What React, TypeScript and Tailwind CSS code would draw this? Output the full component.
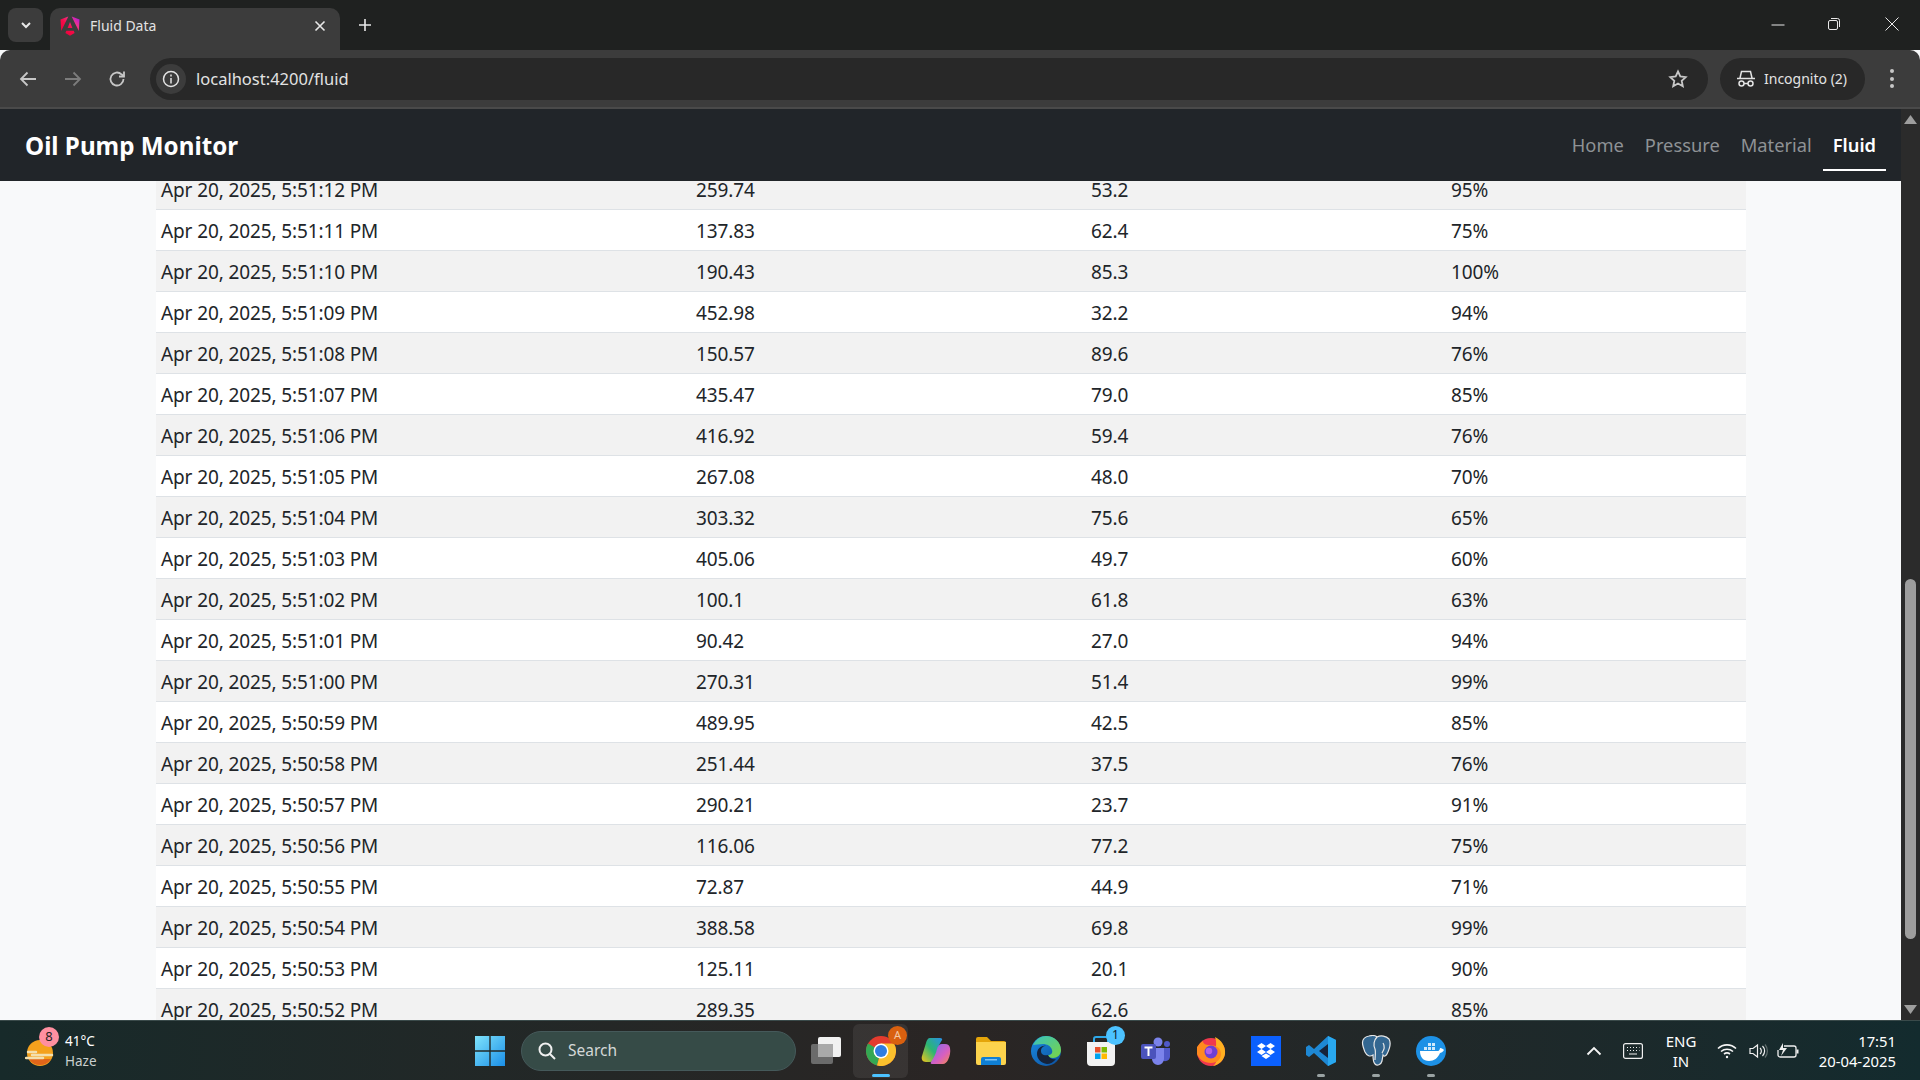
const rows = [
  ['Apr 20, 2025, 5:51:12 PM', '259.74', '53.2', '95%'],
  ['Apr 20, 2025, 5:51:11 PM', '137.83', '62.4', '75%'],
  ['Apr 20, 2025, 5:51:10 PM', '190.43', '85.3', '100%'],
  ['Apr 20, 2025, 5:51:09 PM', '452.98', '32.2', '94%'],
  ['Apr 20, 2025, 5:51:08 PM', '150.57', '89.6', '76%'],
  ['Apr 20, 2025, 5:51:07 PM', '435.47', '79.0', '85%'],
  ['Apr 20, 2025, 5:51:06 PM', '416.92', '59.4', '76%'],
  ['Apr 20, 2025, 5:51:05 PM', '267.08', '48.0', '70%'],
  ['Apr 20, 2025, 5:51:04 PM', '303.32', '75.6', '65%'],
  ['Apr 20, 2025, 5:51:03 PM', '405.06', '49.7', '60%'],
  ['Apr 20, 2025, 5:51:02 PM', '100.1', '61.8', '63%'],
  ['Apr 20, 2025, 5:51:01 PM', '90.42', '27.0', '94%'],
  ['Apr 20, 2025, 5:51:00 PM', '270.31', '51.4', '99%'],
  ['Apr 20, 2025, 5:50:59 PM', '489.95', '42.5', '85%'],
  ['Apr 20, 2025, 5:50:58 PM', '251.44', '37.5', '76%'],
  ['Apr 20, 2025, 5:50:57 PM', '290.21', '23.7', '91%'],
  ['Apr 20, 2025, 5:50:56 PM', '116.06', '77.2', '75%'],
  ['Apr 20, 2025, 5:50:55 PM', '72.87', '44.9', '71%'],
  ['Apr 20, 2025, 5:50:54 PM', '388.58', '69.8', '99%'],
  ['Apr 20, 2025, 5:50:53 PM', '125.11', '20.1', '90%'],
  ['Apr 20, 2025, 5:50:52 PM', '289.35', '62.6', '85%'],
];

const TabStrip = () => (
  <div className="flex h-[50px] shrink-0 items-end bg-[#1f2120] pl-2">
    <div className="mb-2 flex h-[34px] w-[35px] items-center justify-center rounded-lg bg-[#3c3c3c]">
      <svg width="14" height="14" viewBox="0 0 14 14" fill="none" stroke="#e8e8e8" strokeWidth="2"><path d="M3 5l4 4 4-4" /></svg>
    </div>
    <div className="ml-[7px] flex h-[42px] w-[290px] items-center rounded-t-[10px] bg-[#3c3c3c] pb-[6px] pl-[10px] pr-[14px]">
      <svg width="20" height="21" viewBox="0 0 20 21">
        <defs>
          <linearGradient id="ng" x1="0" y1="1" x2="1" y2="0">
            <stop offset="0" stopColor="#e40035" />
            <stop offset="0.45" stopColor="#f60a48" />
            <stop offset="0.7" stopColor="#f2338d" />
            <stop offset="1" stopColor="#a414f0" />
          </linearGradient>
        </defs>
        <path d="M19.5 3.5L18.8 15 11.7 0.5zM14.6 17L10 19.8 5.4 17l.9-2.3h7.4zM10 6l2.4 5.9H7.6zM1.2 15L.5 3.5 8.3.5z" fill="url(#ng)" />
      </svg>
      <span className="ml-[10px] flex-1 pb-[2px] font-['Noto_Sans',sans-serif] text-[14px] text-[#e3e3e3]">Fluid Data</span>
      <svg width="12" height="12" viewBox="0 0 12 12" stroke="#e8e8e8" strokeWidth="1.6"><path d="M1.5 1.5l9 9M10.5 1.5l-9 9" /></svg>
    </div>
    <svg className="mb-[18px] ml-[18px]" width="14" height="14" viewBox="0 0 14 14" stroke="#e8e8e8" strokeWidth="1.6"><path d="M7 1v12M1 7h12" /></svg>
    <div className="mb-[19px] ml-auto flex items-center">
      <svg width="14" height="14" viewBox="0 0 14 14" stroke="#e8e8e8" strokeWidth="1"><path d="M0.5 8h13" /></svg>
      <svg className="ml-[42px]" width="14" height="14" viewBox="0 0 14 14" fill="none" stroke="#e8e8e8" strokeWidth="1"><rect x="1.5" y="3.5" width="9" height="9" rx="1.5" /><path d="M4 1.5h6.5a2 2 0 0 1 2 2V10" /></svg>
      <svg className="ml-[44px] mr-[21px]" width="14" height="14" viewBox="0 0 14 14" stroke="#e8e8e8" strokeWidth="1"><path d="M.5.5l13 13M13.5.5l-13 13" /></svg>
    </div>
  </div>
);

const Toolbar = () => (
  <div className="flex h-[59px] shrink-0 items-center rounded-t-[10px] border-b-2 border-[#4a4a4a] bg-[#3c3c3c] pl-[18px] pr-[26px] font-['Noto_Sans',sans-serif]">
    <svg width="20" height="20" viewBox="0 0 20 20" fill="none" stroke="#c7c7c7" strokeWidth="1.8"><path d="M18 10H3M9.5 3.5L3 10l6.5 6.5" /></svg>
    <svg className="ml-[25px]" width="20" height="20" viewBox="0 0 20 20" fill="none" stroke="#7c7c7c" strokeWidth="1.8"><path d="M2 10h15M10.5 3.5L17 10l-6.5 6.5" /></svg>
    <svg className="ml-[24px]" width="20" height="20" viewBox="0 0 20 20" fill="none" stroke="#c7c7c7" strokeWidth="1.8"><path d="M16.5 10a6.5 6.5 0 1 1-2-4.700L17 7.5" /><path d="M17 2.5v5h-5" /></svg>
    <div className="ml-[23px] flex h-[42px] flex-1 items-center rounded-full bg-[#282828] pl-[6px] pr-[20px]">
      <div className="flex h-[30px] w-[30px] items-center justify-center rounded-full bg-[#3c3c3c]">
        <svg width="18" height="18" viewBox="0 0 18 18" fill="none" stroke="#e3e3e3" strokeWidth="1.5"><circle cx="9" cy="9" r="7.5" /><path d="M9 8v5.5M9 4.5v2" /></svg>
      </div>
      <span className="ml-[10px] flex-1 pt-[1px] text-[16.5px] text-[#e3e3e3]">localhost:4200/fluid</span>
      <svg width="20" height="20" viewBox="0 0 20 20" fill="none" stroke="#c7c7c7" strokeWidth="1.8"><path d="M10 2.5l2.3 5 5.400.6-4 3.700 1.100 5.400L10 14.5l-4.800 2.700 1.100-5.400-4-3.700 5.400-.6z" /></svg>
    </div>
    <div className="ml-[12px] flex h-[42px] w-[145px] items-center rounded-full bg-[#282828] pl-[16px]">
      <svg width="20" height="18" viewBox="0 0 20 18" fill="none" stroke="#e3e3e3" strokeWidth="1.5"><path d="M1 8.5h18M4 8l1.5-6.5h9L16 8" /><circle cx="5.5" cy="13.5" r="2.5" /><circle cx="14.5" cy="13.5" r="2.5" /><path d="M8 13.5h4" /></svg>
      <span className="ml-[8px] text-[14px] text-[#e3e3e3]">Incognito (2)</span>
    </div>
    <div className="ml-[25px] flex flex-col gap-[3.5px]">
      <span className="h-[4px] w-[4px] rounded-full bg-[#c7c7c7]" />
      <span className="h-[4px] w-[4px] rounded-full bg-[#c7c7c7]" />
      <span className="h-[4px] w-[4px] rounded-full bg-[#c7c7c7]" />
    </div>
  </div>
);

const NavLink = ({ label, active }: { label: string; active?: boolean }) => (
  <div className={`flex h-[48px] items-center border-b-2 px-[10px] pb-[3px] ${active ? 'border-white font-semibold text-white' : 'border-transparent text-[#8e9295]'}`}>{label}</div>
);

const Navbar = () => (
  <div className="flex h-[72px] shrink-0 items-center justify-between bg-[#212529] pl-[25px] pr-[15px] font-['Noto_Sans',sans-serif]">
    <span className="pt-[3px] text-[24.2px] font-bold text-white">Oil Pump Monitor</span>
    <div className="flex items-center gap-[1px] pt-[4px] text-[18.3px]">
      <NavLink label="Home" />
      <NavLink label="Pressure" />
      <NavLink label="Material" />
      <NavLink label="Fluid" active />
    </div>
  </div>
);

const DataTable = () => (
  <div className="min-h-0 flex-1 overflow-hidden bg-[#f8f9fa] pl-[156px] pr-[155px]">
    <div className="-mt-[12px] font-['Noto_Sans',sans-serif] text-[19px] tracking-[-0.12px] text-[#212529]">
      {rows.map((r, i) => (
        <div key={r[0]} className={`grid h-[41px] grid-cols-[535px_395px_360px_300px] items-center border-b border-[#dee2e6] pl-[5px] pt-[2px] ${i % 2 === 0 ? 'bg-[#f2f2f2]' : 'bg-white'}`}>
          {r.map((c) => (
            <span key={c}>{c}</span>
          ))}
        </div>
      ))}
    </div>
  </div>
);

const Scrollbar = () => (
  <div className="flex w-[19px] shrink-0 flex-col items-center bg-[#2b2b2b]">
    <svg className="mt-[6px]" width="13" height="9" viewBox="0 0 13 9" fill="#9e9e9e"><path d="M6.5 0L13 9H0z" /></svg>
    <div className="mt-[455px] h-[360px] w-[11px] rounded-full bg-[#9e9e9e]" />
    <svg className="mb-[6px] mt-auto" width="13" height="9" viewBox="0 0 13 9" fill="#9e9e9e"><path d="M6.5 9L13 0H0z" /></svg>
  </div>
);

const Slot = ({ children, dot, active }: { children: React.ReactNode; dot?: boolean; active?: boolean }) => (
  <div className={`relative flex h-[54px] w-[55px] items-center justify-center ${active ? 'rounded-md bg-[#ffffff12]' : ''}`}>
    {children}
    {dot && <span className={`absolute bottom-[1px] h-[3px] rounded-full ${active ? 'w-[18px] bg-[#4cc2ff]' : 'w-[8px] bg-[#9aa3a3]'}`} />}
  </div>
);

const Chrome = () => (
  <svg width="30" height="30" viewBox="0 0 30 30">
    <circle cx="15" cy="15" r="15" fill="#e33b2e" />
    <path d="M15 15L2 7.5A15 15 0 0 0 11 29.5z" fill="#34a853" />
    <path d="M15 15l-4 14.5A15 15 0 0 0 28 7.5H15z" fill="#fbc02d" />
    <circle cx="15" cy="15" r="7.5" fill="#fff" />
    <circle cx="15" cy="15" r="6" fill="#2f7de1" />
  </svg>
);

const TaskIcons = () => (
  <div className="flex items-center">
    <Slot>
      <svg width="32" height="30" viewBox="0 0 32 30">
        <rect x="1" y="8" width="22" height="20" rx="2" fill="#6b6b6b" />
        <rect x="8" y="1" width="23" height="20" rx="2" fill="#f1f1f1" />
        <rect x="8" y="8" width="15" height="13" fill="#a9a9a9" />
      </svg>
    </Slot>
    <Slot dot active>
      <Chrome />
      <span className="absolute right-[1px] top-[2px] flex h-[19px] w-[19px] items-center justify-center rounded-full bg-[#d9600f] font-['Noto_Sans',sans-serif] text-[11px] text-[#f5c9a5]">A</span>
    </Slot>
    <Slot>
      <svg width="30" height="28" viewBox="0 0 30 28">
        <defs>
          <linearGradient id="cp1" x1="0" y1="1" x2="1" y2="0"><stop offset="0" stopColor="#f5c518" /><stop offset="0.5" stopColor="#2bb673" /><stop offset="1" stopColor="#2a8fe8" /></linearGradient>
          <linearGradient id="cp2" x1="0" y1="0" x2="1" y2="1"><stop offset="0" stopColor="#7a6cf0" /><stop offset="0.6" stopColor="#d75fc0" /><stop offset="1" stopColor="#f48a4b" /></linearGradient>
        </defs>
        <path d="M9 1h10c2 0 2.5 1 2 2-3 4-5 10-7 18-.5 3-3 4-5 4H5c-3.5 0-5-3-4-6L5 6c.7-3 2-5 4-5z" fill="url(#cp1)" />
        <path d="M21 7h3c3 0 4.5 1.5 5 4 .7 4 0 8-2 12-1 2-3 4-5 4H11c-1.5 0-1.5-1-1-2 3-4 5-9 6-13 .7-3 2.5-5 5-5z" fill="url(#cp2)" />
      </svg>
    </Slot>
    <Slot>
      <svg width="30" height="28" viewBox="0 0 30 28">
        <path d="M0 2a2 2 0 0 1 2-2h9l4 4h13a2 2 0 0 1 2 2v4H0z" fill="#e5a50a" />
        <path d="M0 5h30v21a2 2 0 0 1-2 2H2a2 2 0 0 1-2-2z" fill="#fcd34d" />
        <path d="M5 28v-6a2 2 0 0 1 2-2h16a2 2 0 0 1 2 2v6z" fill="#0f7fd4" />
        <rect x="9" y="22" width="12" height="1.5" fill="#7cc4f5" />
      </svg>
    </Slot>
    <Slot>
      <svg width="30" height="30" viewBox="0 0 30 30">
        <defs>
          <linearGradient id="ed1" x1="0" y1="0" x2="1" y2="1"><stop offset="0" stopColor="#37c3c0" /><stop offset="1" stopColor="#7bd443" /></linearGradient>
          <linearGradient id="ed2" x1="0" y1="0" x2="1" y2="1"><stop offset="0" stopColor="#1a8be0" /><stop offset="1" stopColor="#0c4f9e" /></linearGradient>
        </defs>
        <circle cx="15" cy="15" r="15" fill="url(#ed2)" />
        <path d="M2 9C5 3 10 0 15 0c8 0 15 6 15 14 0 5-4 8-8 8-3 0-5-1-5-3 3 0 5-2 4-5-1-4-5-6-9-6-4 0-8 1-10 1z" fill="url(#ed1)" />
        <path d="M17 19c-3 1-7 0-7-4 0-3 2-5 5-5-5-1-9 3-9 8 0 5 4 9 10 10 3 0 7-2 9-5-3 1-6 0-8-4z" fill="#16233a" />
      </svg>
    </Slot>
    <Slot>
      <svg width="30" height="30" viewBox="0 0 30 30">
        <path d="M8 6V3a2 2 0 0 1 2-2h10a2 2 0 0 1 2 2v3" fill="none" stroke="#2ea8e8" strokeWidth="2" />
        <path d="M1 6h28v20a4 4 0 0 1-4 4H5a4 4 0 0 1-4-4z" fill="#f2f2f2" />
        <rect x="9" y="11" width="5.5" height="5.5" fill="#e8522c" />
        <rect x="15.5" y="11" width="5.5" height="5.5" fill="#7fba00" />
        <rect x="9" y="17.5" width="5.5" height="5.5" fill="#00a4ef" />
        <rect x="15.5" y="17.5" width="5.5" height="5.5" fill="#ffb900" />
      </svg>
      <span className="absolute right-[3px] top-[2px] flex h-[19px] w-[19px] items-center justify-center rounded-full bg-[#4cc2ff] font-['Noto_Sans',sans-serif] text-[12px] text-[#10202a]">1</span>
    </Slot>
    <Slot>
      <svg width="30" height="28" viewBox="0 0 30 28">
        <circle cx="17" cy="5" r="4.5" fill="#7b83eb" />
        <circle cx="26" cy="7" r="3" fill="#5059c9" />
        <path d="M20 11h9v9a5 5 0 0 1-9 2z" fill="#5059c9" />
        <path d="M9 11h14v11a6 6 0 0 1-12 0z" fill="#7b83eb" />
        <rect x="0" y="7" width="15" height="15" rx="2" fill="#4b53bc" />
        <path d="M3.5 10.5h8M7.5 10.5V19" stroke="#fff" strokeWidth="2" />
      </svg>
    </Slot>
    <Slot>
      <svg width="30" height="30" viewBox="0 0 30 30">
        <circle cx="15" cy="16" r="14" fill="#f0384e" />
        <path d="M19 1c6 3 11 9 10 17-1 6-6 11-12 12 5-4 5-10 2-14 1-5 2-10 0-15z" fill="#ffb020" />
        <path d="M1 11c2-3 4-5 6-6 0 3 3 4 6 4 7 0 12 3 12 9 0 5-4 9-10 9C8 27 3 23 1 18z" fill="#ff8a1e" />
        <circle cx="15" cy="16" r="6.5" fill="#6d3fd4" />
        <circle cx="13" cy="15" r="3.2" fill="#b15fe8" />
      </svg>
    </Slot>
    <Slot>
      <div className="flex h-[30px] w-[30px] items-center justify-center bg-[#0b60fe]">
        <svg width="18" height="16" viewBox="0 0 18 16" fill="#fff"><path d="M4.5 0L9 3 4.5 6 0 3zM13.5 0L18 3l-4.5 3L9 3zM4.5 6L9 9l-4.5 3L0 9zM13.5 6L18 9l-4.5 3L9 9zM4.5 13L9 10.5l4.5 2.5L9 16z" /></svg>
      </div>
    </Slot>
    <Slot dot>
      <svg width="30" height="30" viewBox="0 0 30 30">
        <path d="M22 0l8 4v22l-8 4L8 17l-5 4-3-2V11l3-2 5 4z" fill="#1e88d4" />
        <path d="M22 0l8 4v22l-8 4z" fill="#29a8ef" />
        <path d="M22 8v14l-9-7z" fill="#16233a" />
      </svg>
    </Slot>
    <Slot dot>
      <svg width="30" height="32" viewBox="0 0 30 32">
        <path d="M8 1c4-1 7 0 8 1 4-2 9-1 12 2 3 5 0 11-2 15-1 2-3 3-4 1l-1 6c-1 4-5 5-7 3-2-2-2-6-2-9-3 2-6 1-8-3C2 12-2 3 8 1z" fill="#336791" stroke="#e7e7e7" strokeWidth="1.2" />
        <path d="M16 2c-3 3-4 8-2 12 1 3 0 8 0 11M22 8c2 3 1 7-1 10" fill="none" stroke="#e7e7e7" strokeWidth="1.2" />
      </svg>
    </Slot>
    <Slot dot>
      <svg width="30" height="30" viewBox="0 0 30 30">
        <circle cx="15" cy="15" r="15" fill="#1d91e6" />
        <path d="M4 15h18c1 0 2-2 2-3 2 0 3 1 4 2-1 2-3 3-4 3-2 5-6 8-11 8-6 0-9-4-9-10z" fill="#fff" />
        <path d="M8 11h3v3H8zM12 11h3v3h-3zM16 11h3v3h-3zM12 7h3v3h-3zM16 7h3v3h-3z" fill="#cfe9fb" />
      </svg>
    </Slot>
  </div>
);

const Taskbar = () => (
  <div className="relative flex h-[60px] shrink-0 items-center border-t border-[#3a4a4a] bg-gradient-to-r from-[#172a2a] via-[#2a2524] to-[#132b2e] font-['Noto_Sans',sans-serif] text-white">
    <div className="flex w-[475px] items-center pl-[25px]">
      <div className="relative h-[30px] w-[30px]">
        <svg className="mt-[2px]" width="30" height="30" viewBox="0 0 30 30">
          <circle cx="15" cy="15" r="13" fill="#f4a11d" />
          <path d="M4 21a13 13 0 0 0 22 0z" fill="#e0651a" />
          <path d="M1 20h17M3 14h8M7 17h20" stroke="#f3dfae" strokeWidth="2.5" strokeLinecap="round" />
        </svg>
        <span className="absolute -right-[4px] -top-[9px] flex h-[20px] w-[20px] items-center justify-center rounded-full bg-[#ff8fa0] text-[13px] text-[#222]">8</span>
      </div>
      <div className="ml-[10px] flex flex-col text-[13.5px] leading-[20px]">
        <span>41°C</span>
        <span className="text-[#c9cfcf]">Haze</span>
      </div>
    </div>
    <svg width="30" height="30" viewBox="0 0 30 30">
      <defs><linearGradient id="win" x1="0" y1="0" x2="1" y2="1"><stop offset="0" stopColor="#7fe3fb" /><stop offset="1" stopColor="#1a8fe8" /></linearGradient></defs>
      <path d="M0 0h14.3v14.3H0zM15.7 0H30v14.3H15.7zM0 15.7h14.3V30H0zM15.7 15.7H30V30H15.7z" fill="url(#win)" />
    </svg>
    <div className="ml-[16px] mr-[2px] flex h-[40px] w-[275px] items-center rounded-full border border-[#45595a] bg-[#364b47] pl-[15px]">
      <svg width="20" height="20" viewBox="0 0 20 20" fill="none" stroke="#f0f0f0" strokeWidth="2"><circle cx="8.5" cy="8.5" r="6" /><path d="M13 13l5 5" /></svg>
      <span className="ml-[11px] text-[15.5px] text-[#d4d8d8]">Search</span>
    </div>
    <TaskIcons />
    <div className="ml-auto flex items-center pr-[24px]">
      <svg width="16" height="10" viewBox="0 0 16 10" fill="none" stroke="#f5f5f5" strokeWidth="1.8"><path d="M1.5 8.5L8 2l6.5 6.5" /></svg>
      <svg className="ml-[21px]" width="20" height="16" viewBox="0 0 20 16" fill="none" stroke="#f0f0f0" strokeWidth="1.2"><rect x=".6" y=".6" width="18.8" height="14.8" rx="2" /><path d="M4 4.5h1M7 4.5h1M10 4.5h1M13 4.5h1M16 4.5h.5M4 7.5h1M7 7.5h1M10 7.5h1M13 7.5h1M16 7.5h.5M6 11h8" /></svg>
      <div className="ml-[16px] flex w-[44px] flex-col items-center text-[15px] leading-[20px]">
        <span>ENG</span>
        <span>IN</span>
      </div>
      <svg className="ml-[14px]" width="20" height="16" viewBox="0 0 20 16" fill="none" stroke="#f5f5f5" strokeWidth="1.6"><path d="M1 5.5a13 13 0 0 1 18 0M4 8.5a9 9 0 0 1 12 0M7 11a5 5 0 0 1 6 0" /><circle cx="10" cy="14" r="1.2" fill="#f5f5f5" stroke="none" /></svg>
      <svg className="ml-[12px]" width="20" height="16" viewBox="0 0 20 16" fill="none" stroke="#f0f0f0" strokeWidth="1.2"><path d="M1 5.5h3L8.5 2v12L4 10.5H1zM11 5a4 4 0 0 1 0 6M13.5 3a7 7 0 0 1 0 10" /><path d="M16 1.5a10 10 0 0 1 0 13" stroke="#5f6c6c" /></svg>
      <svg className="ml-[8px]" width="22" height="18" viewBox="0 0 22 18" fill="none" stroke="#f0f0f0" strokeWidth="1.3"><path d="M7 4h10a2 2 0 0 1 2 2v7a2 2 0 0 1-2 2H3a2 2 0 0 1-2-2V8" /><path d="M20.5 7.5v4" strokeWidth="2" /><path d="M6 1L2 8h4l-2 6 6-8H6z" fill="#f0f0f0" stroke="none" /></svg>
      <div className="ml-[19px] flex w-[78px] flex-col items-end text-[14.8px] leading-[20px]">
        <span>17:51</span>
        <span>20-04-2025</span>
      </div>
    </div>
  </div>
);

export default function App() {
  return (
    <div className="flex h-screen w-screen flex-col overflow-hidden bg-[#f8f9fa]">
      <TabStrip />
      <Toolbar />
      <div className="flex min-h-0 flex-1">
        <div className="flex min-w-0 flex-1 flex-col">
          <Navbar />
          <DataTable />
        </div>
        <Scrollbar />
      </div>
      <Taskbar />
    </div>
  );
}
